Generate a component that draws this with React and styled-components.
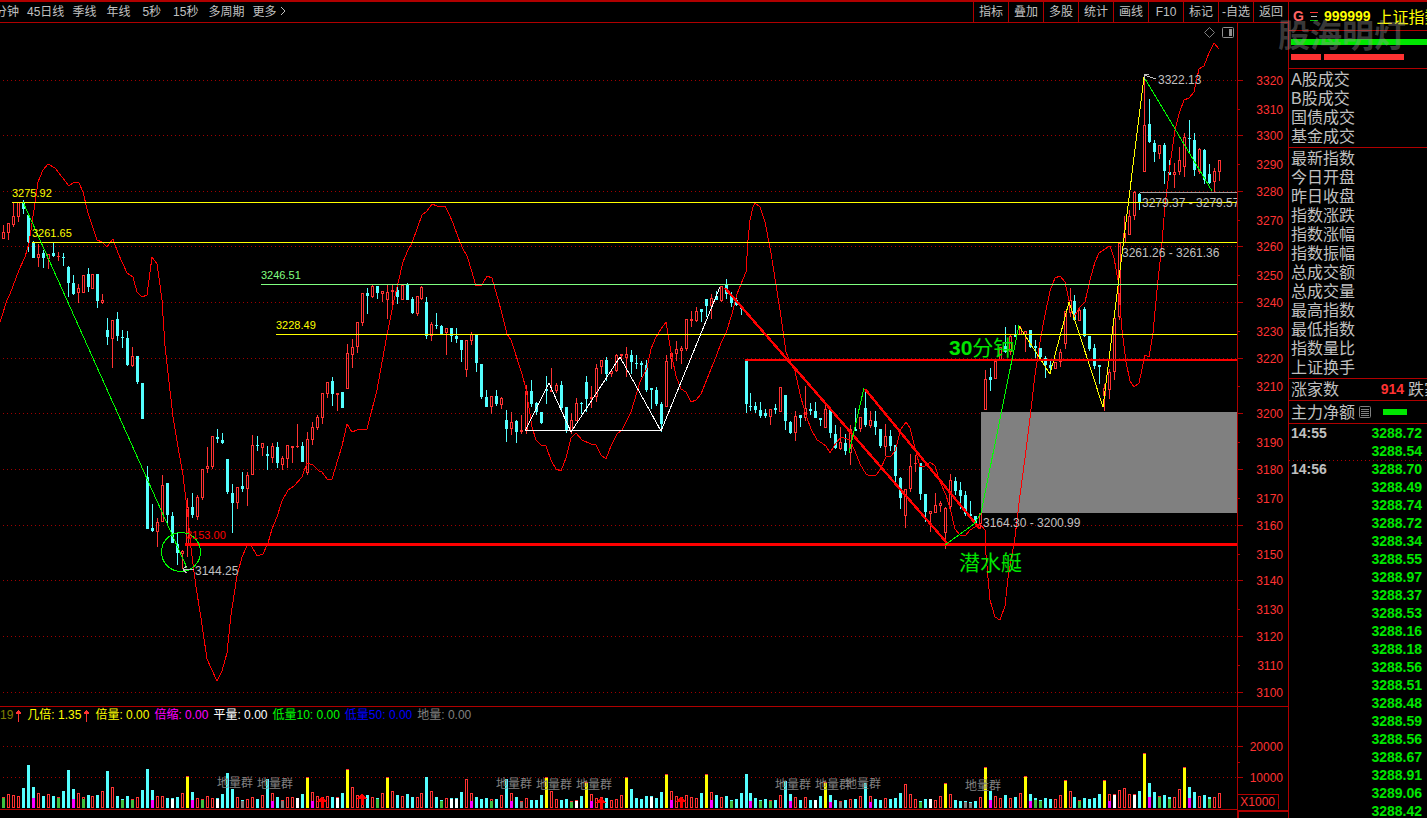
import React from "react";
import styled, { createGlobalStyle } from "styled-components";

const GlobalStyle = createGlobalStyle`
  * {
    box-sizing: border-box;
  }
  body {
    margin: 0;
    background: #000;
    color: #c0c0c0;
    font-family: "Liberation Sans", "Noto Sans CJK SC", sans-serif;
    font-size: 12px;
  }
`;

const RED = "#ff3232";
const CYAN = "#54ffff";
const FRAME = "#b00000";
const YELLOW = "#ffff00";
const GREEN = "#00ff00";

// direction + high,open/close top,open/close bottom,low
const candles = `
r225,232,239,239 r223,223,233,240 r202,216,225,227 r202,202,217,222 c200,202,209,214
c215,215,242,252 c241,242,258,258 r244,254,258,267 c250,253,258,268 r254,254,259,269
c243,253,256,257 r252,256,257,261 c253,257,258,266 c266,267,283,297 c275,283,294,295
r284,288,293,303 r275,275,293,293 c268,274,287,292 r274,274,289,289 c274,274,301,308
r294,300,303,304 c318,330,337,345 r320,320,339,368 c312,319,336,341 c330,337,338,348
c331,338,365,366 r347,356,366,367 c356,356,382,384 c383,383,419,419 c466,477,529,529
c504,528,531,532 r518,522,532,547 r475,485,522,522 c483,483,515,525 c512,516,543,543
c533,544,553,565 r550,551,554,569 r498,507,545,557 c493,507,515,518 r495,497,517,520
r469,469,498,500 r447,466,469,473 r436,436,467,469 c429,437,439,443 c433,440,443,444
c459,459,492,494 c484,493,503,533 r487,487,503,509 c472,486,489,492 r472,475,489,506
r435,445,475,475 c436,445,446,451 r443,443,448,456 c446,454,456,470 r443,446,458,463
c442,447,463,468 r456,458,465,470 r445,445,459,468 r446,446,448,463 r424,446,447,448
c442,446,462,462 r432,439,473,475 r422,427,440,445 r415,417,428,430 r393,393,418,424
r382,382,394,398 c377,381,394,406 r393,393,395,411 c392,392,408,408 r344,353,389,389
r339,347,355,368 r322,322,347,353 r293,293,323,326 c288,293,296,314 r285,286,297,298
c286,286,293,299 r291,291,294,302 r285,292,300,319 r285,290,292,306 c284,290,297,304
r285,285,300,300 c283,284,300,300 c297,299,313,314 r296,296,314,316 r286,287,299,300
c297,302,336,339 r322,324,336,341 c313,325,326,329 c325,326,334,334 r328,328,333,355
c328,328,336,342 c328,336,339,343 c340,340,350,362 r340,340,370,377 r332,334,341,345
c334,334,363,372 c364,364,397,399 c390,397,407,407 r396,396,407,414 c390,396,404,406
r397,398,405,409 c410,420,429,442 r412,422,429,435 c420,421,432,443 r415,430,432,434
r385,391,430,434 c380,391,404,407 c402,403,412,415 c412,412,423,424 c376,389,391,404
r368,390,392,392 r383,385,391,393 c381,385,408,411 c407,407,431,433 r413,420,431,434
r398,403,421,421 c402,403,404,414 c376,382,399,412 r386,397,399,408 r364,368,397,402
r360,360,367,374 c357,360,374,381 r370,371,374,377 r354,355,371,372 r354,354,356,359
r347,354,358,377 c350,355,362,374 c355,363,364,369 c361,363,365,377 c360,365,390,392
c388,388,390,409 c387,390,404,406 c402,404,424,432 r355,361,407,407 r353,353,359,369
r341,349,354,361 r346,348,351,364 r319,319,349,351 r311,319,321,327 r307,311,321,322
c309,309,312,322 c299,299,306,317 r294,298,306,319 c291,296,300,300 r286,286,301,302
c279,284,294,299 c292,296,303,307 c295,300,305,306 c305,306,309,315 c360,360,404,413
c393,406,407,411 c402,406,410,413 c402,410,416,418 c409,413,416,418 r409,409,417,425
c404,408,410,414 r387,387,412,412 c395,395,421,430 c421,422,433,434 r411,416,433,441
c415,415,418,427 r386,408,418,421 c403,409,411,415 c402,411,418,418 c418,418,420,426
r405,409,428,428 c407,409,433,438 c425,434,448,449 r427,442,449,450 c434,443,451,455
r425,429,453,465 c408,429,431,431 r417,417,429,432 c389,408,425,427 r411,420,426,428
c411,421,427,435 c429,429,446,448 r424,436,447,456 c430,436,446,451 c445,445,476,482
c477,478,498,509 r489,489,516,528 r454,466,489,492 r455,463,464,472 c463,463,494,500
c494,494,512,522 r511,511,514,532 r493,505,513,513 r501,503,506,512 r507,508,533,549
r474,480,507,511 c477,481,491,495 c482,490,496,509 c491,495,514,516 c501,514,516,516
c516,516,524,524 r513,513,524,529 r370,379,410,410 c368,377,380,391 r361,361,379,379
r347,347,360,361 c327,346,352,353 r334,336,352,355 c325,335,337,337 r326,328,335,335
r331,331,335,352 c330,330,347,348 c340,346,348,358 c348,348,357,359 c356,358,365,378
c360,365,368,371 r362,362,369,369 r349,352,362,367 r311,311,344,349 r288,300,313,317
c295,301,320,321 r309,310,321,321 c307,309,336,337 c336,336,349,351 c344,348,366,369
c365,365,367,384 r384,388,396,411 r369,372,390,399 r318,318,372,380 r243,243,317,320
r216,233,243,243 r210,216,235,235 r191,192,216,220 c193,194,202,210 r77,125,172,172
c99,124,142,143 c140,143,152,162 r145,145,154,159 c143,145,171,184 c160,172,175,175
r163,172,175,188 r147,160,172,175 r133,137,167,177 c120,138,139,153 c133,140,170,176
r148,149,172,174 c149,150,180,184 c164,174,183,184 r168,171,182,192 r160,160,172,181
`
  .trim()
  .split(/\s+/)
  .map((s) => ({ up: s[0] === "r", v: s.slice(1).split(",").map(Number) }));

// kind + height, then an optional marker colour + height at the foot of the bar
const volumes = `
r11g10 r14 r13 r12 c20 c43 c21m10 r15 c12 r14 c12 r11g10 c17 c38 c19m9 r15 r11g9 c13
r12 c13 r17 c37 r21 c12 c9g8 c12 r9g8 r11 c18 c39 c18m8 r12 r12 c10 c10w9 c11
r15 y32 c16m8 r10 r9g8 r12 r10 c10w9 c14 c35 c19 r11 c8k7 r9 r11 c9 r13 c29
r15m7 c11 r8k7 r11 r11 w10 c14 y31 r16m7 r12 r11 r12 c11 r11w10 c15 y39 r21 r13
r13 c13 r11 c10g9 r15 y31 r17 c13 r12 c14 c11 r11 r15 c31 r17 c11 c8g7 r10
c10w9 c10w9 c16 r29 r15m7 c11 c9 c10 r9g7 c9 r13 c29 r15m7 c11 r7k6 r10 c8 c8
c13 y31 r17 r9 c8 c9 r7g6 r8w7 c12 y26 r14m7 r10 r11 c10 r8 r9 r13 y31
c19 c10 c9 c12 c12w11 c10 c16 y34 r17m8 r12 r11 r13 r11 r10 c15 y34 r16m8 c13
r11 c12 c8g7 c9 c15 c34 c15m7 c10 c8g7 c9 r8g7 c8 r13 c27 c14m7 r11 c8 r11
c8 w8 c12 y26 c13m6 c8 r7k6 c8 r9 c9 r12 c25 r12m6 c9 c8 r10 c9 c10
c15 r24 r14 r9 c7g6 c9 w9 r8 r12 y25 r14 c8 c7 c7k6 c6k5 c7 r11 y41
c17m8 r12 r10 c13 r10 c11 r15 y32 c14m7 c10g8 c8g7 c10 c9 r9 r13 y28 r17 c11
r8g7 c10 c9 c10 c14 y28 r14m7 r14w13 r18 r20 r14 r14w13 c17 y55 c25m11 c16 r12g11 c13
c11g9 r11 r19 y41 c21m10 c16 r12 c13 c11g9 r11 r15
`
  .trim()
  .split(/\s+/)
  .map((s) => {
    const m = s.match(/^(\w)(\d+)(?:([a-z])(\d+))?$/);
    return { kind: m[1], h: Number(m[2]), foot: m[3], footH: Number(m[4] || 0) };
  });

const volumeColors = {
  r: RED,
  c: CYAN,
  y: YELLOW,
  w: "#ffffff",
  m: "#ff00ff",
  g: "#40c040",
  k: "#808080",
};

const average =
  "0,322 2,316 7,300 10,294 19,270 25,257 29,243 34,210 38,182 43,170 48,164 55,168 62,177 69,186 74,182 79,183 83,192 88,213 92,225 97,240 102,242 107,247 113,239 118,253 127,273 133,277 137,292 142,297 147,295 152,257 157,264 160,285 162,300 165,346 168,373 173,417 178,447 183,475 188,517 191,548 196,587 201,618 207,659 212,670 217,681 222,671 227,653 231,615 237,576 242,557 247,546 251,545 257,556 263,554 268,543 272,529 277,517 282,501 288,490 294,486 302,477 307,463 313,465 319,471 322,472 327,479 332,479 342,446 347,424 352,432 357,430 367,429 377,390 387,335 394,300 403,262 408,250 412,243 417,229 422,215 427,211 432,204 437,206 445,206 449,214 453,223 458,237 463,249 467,256 472,272 476,286 482,285 487,276 492,278 501,310 507,334 511,340 522,374 526,389 532,427 536,440 541,445 546,446 551,460 556,469 561,471 566,458 571,438 576,433 582,440 591,444 596,445 601,455 606,459 611,446 617,434 622,430 631,412 640,382 647,368 651,349 656,337 661,329 666,322 671,352 676,376 681,389 686,392 691,402 696,400 701,394 711,369 716,357 721,343 726,333 732,314 737,294 741,284 746,272 748,240 750,220 753,207 755,203 760,207 765,222 771,253 776,285 780,310 786,352 791,364 795,371 801,398 806,415 811,429 817,440 822,443 826,446 830,453 836,443 841,437 850,440 855,451 860,464 866,474 870,476 876,475 880,470 886,457 891,456 895,451 901,429 906,422 910,428 915,448 920,467 925,466 930,462 935,466 940,482 946,495 951,512 955,529 960,535 965,536 970,530 980,524 985,530 986,555 990,600 995,617 1000,620 1005,606 1008,578 1015,537 1020,495 1025,458 1030,418 1035,375 1040,342 1044,320 1050,291 1055,278 1060,276 1065,282 1070,305 1074,317 1080,307 1085,302 1090,280 1095,262 1099,253 1105,249 1110,246 1114,258 1118,280 1122,330 1126,362 1130,381 1134,387 1139,383 1145,355 1149,357 1153,333 1157,290 1162,243 1165,205 1170,165 1175,130 1179,114 1184,100 1189,98 1194,92 1199,69 1204,66 1209,53 1214,43 1219,49";

const axis = [
  80, 109, 135, 164, 191, 220, 246, 275, 302, 331, 358, 386, 413, 442, 469, 498,
  525, 554, 580, 609, 636, 665, 692,
].map((y, i) => ({ y, label: 3320 - i * 10, major: i % 2 === 0 }));

const periods = [
  { label: "分钟" },
  { label: "45日线" },
  { label: "季线" },
  { label: "年线", wide: true },
  { label: "5秒", wide: true },
  { label: "15秒", wide: true },
  { label: "多周期" },
  { label: "更多" },
];
const tools = ["指标", "叠加", "多股", "统计", "画线", "F10", "标记", "-自选", "返回"];

const indicators = [
  { text: "19", color: "#808000", arrow: true },
  { text: "几倍: 1.35", color: YELLOW, arrow: true },
  { text: "倍量: 0.00", color: YELLOW },
  { text: "倍缩: 0.00", color: "#ff00ff" },
  { text: "平量: 0.00", color: "#ffffff" },
  { text: "低量10: 0.00", color: GREEN },
  { text: "低量50: 0.00", color: "#0000ff" },
  { text: "地量: 0.00", color: "#808080" },
];

const groups = [
  [217, 787],
  [257, 788],
  [496, 788],
  [536, 789],
  [576, 789],
  [775, 789],
  [815, 789],
  [845, 788],
  [965, 790],
];
const arrows = [
  [322, 796],
  [362, 793],
  [601, 797],
  [681, 796],
];

const turnover = ["A股成交", "B股成交", "国债成交", "基金成交"];
const quotes = [
  "最新指数",
  "今日开盘",
  "昨日收盘",
  "指数涨跌",
  "指数涨幅",
  "指数振幅",
  "总成交额",
  "总成交量",
  "最高指数",
  "最低指数",
  "指数量比",
  "上证换手",
];
const ticks = [
  "3288.72",
  "3288.54",
  "3288.70",
  "3288.49",
  "3288.74",
  "3288.72",
  "3288.34",
  "3288.55",
  "3288.97",
  "3288.37",
  "3288.53",
  "3288.16",
  "3288.18",
  "3288.56",
  "3288.51",
  "3288.48",
  "3288.59",
  "3288.56",
  "3288.67",
  "3288.91",
  "3289.06",
  "3288.42",
];
const tickTimes = { 0: "14:55", 2: "14:56" };

// bars are a little under 5px apart, so one pixel is dropped every 65 bars or so
const barX = (i) => 3 + 5 * i - Math.floor((i + 48) / 65.7);

function Candle({ x, up, v }) {
  const [high, top, bottom, low] = v;
  const color = up ? RED : CYAN;
  const h = Math.max(1, bottom - top);
  return (
    <g fill={color}>
      {top > high && <rect x={x} y={high} width="1" height={top - high} />}
      {low > bottom && <rect x={x} y={bottom} width="1" height={low - bottom} />}
      {up && h > 2 ? (
        <rect x={x - 0.5} y={top + 0.5} width="2" height={h - 1} fill="none" stroke={color} />
      ) : (
        <rect x={x - 1} y={top} width="3" height={h} />
      )}
    </g>
  );
}

function VolumeBar({ x, kind, h, foot, footH }) {
  const top = 808 - h;
  return (
    <g>
      {kind === "r" ? (
        <rect x={x - 0.5} y={top + 0.5} width="2" height={h - 1} fill="none" stroke={RED} />
      ) : (
        <rect x={x - 1} y={top} width="3" height={h} fill={volumeColors[kind]} />
      )}
      {kind === "y" && <rect x={x - 1} y={top} width="3" height="1" fill={RED} />}
      {foot && (
        <rect x={x - 1} y={808 - footH} width="3" height={footH} fill={volumeColors[foot]} />
      )}
    </g>
  );
}

function PriceChart() {
  return (
    <Chart viewBox="0 23 1288 683" role="img" aria-label="上证指数 K线">
      <g shapeRendering="crispEdges" fill="none">
        {axis
          .filter((a) => a.major)
          .map((a) => (
            <path key={a.y} d={`M3 ${a.y}.5H1237`} stroke="#a00000" strokeDasharray="1 3" />
          ))}
        <rect x="981" y="412" width="256" height="101" fill="#808080" />
        {candles.map((c, i) => (
          <Candle key={i} x={barX(i)} {...c} />
        ))}
        <polyline points={average} stroke="#ff0000" />
        <g stroke={YELLOW}>
          <path d="M12 202.5H1237M32 242.5H1237M276 334.5H1237" />
          <path d="M1019 326L1050 374L1069 302L1103 407L1144 77" />
        </g>
        <path d="M261 284.5H1237" stroke="#80ff80" />
        <path d="M1140 192.5H1237" stroke="#a0a0a0" />
        <g stroke="#ff0000">
          <path d="M745 360H1237" strokeWidth="2" />
          <path d="M185 544.5H1237" strokeWidth="3" />
          <path d="M725 288L947 543M865 389L980 529" strokeWidth="2.4" />
        </g>
        <path
          d="M525 430.5H661M525 431L549 383L571 432L620 357L661 431L720 287"
          stroke="#ffffff"
        />
        <g stroke={GREEN}>
          <path d="M23 202L187 568M849 453L864 388M945 545L974 524L981 513L1019 325M1144 77L1212 191" />
          <circle cx="181" cy="552" r="19.5" />
        </g>
        <path
          d="M183 569.5H194M183 569L187 566M183 570L187 573M1144 75L1156 79M1144 75L1145 80M1144 75L1149 74"
          stroke="#c0c0c0"
        />
      </g>
      <path d="M1209.5 27.5L1214.5 32.5L1209.5 37.5L1204.5 32.5Z" fill="none" stroke="#808080" />
      <rect x="1222.5" y="27.5" width="11" height="10" rx="1" fill="none" stroke="#909090" />
      <rect x="1229" y="29" width="3" height="7" fill="#909090" />
      <Level x="12" y="197" fill={YELLOW}>3275.92</Level>
      <Level x="32" y="237" fill={YELLOW}>3261.65</Level>
      <Level x="261" y="279" fill="#80ff80">3246.51</Level>
      <Level x="276" y="329" fill={YELLOW}>3228.49</Level>
      <Level x="186" y="539" fill="#ff0000">3153.00</Level>
      <Note x="195" y="575">3144.25</Note>
      <Note x="1158" y="84">3322.13</Note>
      <Note x="1142" y="207">3279.37 - 3279.57</Note>
      <Note x="1122" y="257">3261.26 - 3261.36</Note>
      <Note x="983" y="527">3164.30 - 3200.99</Note>
      <Mark x="949" y="355">
        <tspan fontWeight="bold">30</tspan>分钟
      </Mark>
      <Mark x="959" y="570">潜水艇</Mark>
      <rect x="1237" y="23" width="51" height="683" fill="#000" />
      <g shapeRendering="crispEdges" stroke={FRAME}>
        <path d="M1237.5 23V706" />
        {axis.map((a) => (
          <path key={a.y} d={`M1238 ${a.y}.5h${a.major ? 5 : 2}`} />
        ))}
      </g>
      {axis.map((a) => (
        <AxisText key={a.y} x="1283" y={a.y + 5}>
          {a.label}
        </AxisText>
      ))}
    </Chart>
  );
}

function VolumeChart() {
  return (
    <Chart viewBox="0 724 1288 94" role="img" aria-label="成交量">
      <g shapeRendering="crispEdges" fill="none">
        <path d="M3 746.5H1237M3 777.5H1237" stroke="#a00000" strokeDasharray="1 3" />
        {volumes.map((v, i) => (
          <VolumeBar key={i} x={barX(i)} {...v} />
        ))}
        {arrows.map(([x, y]) => (
          <path key={x} d={`M${x} ${y}l5 6h-3v6h-3v-6h-4z`} fill="#ff0000" />
        ))}
        <path
          d="M0 809.5H1237M1237.5 724V810M1238 746.5h5M1238 762.5h2M1238 777.5h5M1238 794.5H1278.5V809"
          stroke={FRAME}
        />
        <path d="M1238 818V811H1288" stroke={FRAME} strokeWidth="2" />
      </g>
      {groups.map(([x, y]) => (
        <Group key={x} x={x} y={y}>
          地量群
        </Group>
      ))}
      <AxisText x="1283" y="751">20000</AxisText>
      <AxisText x="1283" y="782">10000</AxisText>
      <AxisText x="1275" y="806">X1000</AxisText>
    </Chart>
  );
}

export default function App() {
  return (
    <Page>
      <GlobalStyle />
      <Main>
        <Toolbar>
          <Periods>
            {periods.map((p) => (
              <Period key={p.label} $wide={p.wide}>
                {p.label}
                {p.label === "更多" && (
                  <svg width="10" height="10" aria-hidden="true">
                    <path d="M5 1L9 5L5 9" fill="none" stroke="#c0c0c0" />
                  </svg>
                )}
              </Period>
            ))}
          </Periods>
          {tools.map((t) => (
            <Tool key={t}>{t}</Tool>
          ))}
        </Toolbar>
        <PriceChart />
        <IndicatorBar>
          <IndicatorList>
            {indicators.map((n) => (
              <Indicator key={n.text} $color={n.color}>
                {n.text}
                {n.arrow && (
                  <svg width="7" height="12" aria-hidden="true" shapeRendering="crispEdges">
                    <path d="M3 0h1v1h1v1h1v2h-2v8h-1v-8h-2v-2h1v-1h1z" fill={RED} />
                  </svg>
                )}
              </Indicator>
            ))}
          </IndicatorList>
        </IndicatorBar>
        <VolumeChart />
      </Main>
      <Side>
        <Title>
          <Flag>G</Flag>
          <TitleIcon viewBox="0 0 8 11" aria-hidden="true" shapeRendering="crispEdges">
            <path d="M0 1.5h8" stroke={RED} />
            <path d="M1 5.5h6" stroke="#c0c0c0" />
            <path d="M0 9.5h8" stroke="#00c000" />
          </TitleIcon>
          <Code>999999</Code>
          <Name>上证指数</Name>
        </Title>
        <Strength>
          <Bar $color="#00e600" />
          <BarPair>
            <Bar $color={RED} $width={30} />
            <Bar $color={RED} $width={80} />
          </BarPair>
        </Strength>
        <Section>
          {turnover.map((t) => (
            <Row key={t}>{t}</Row>
          ))}
        </Section>
        <Section>
          {quotes.map((t) => (
            <Row key={t}>{t}</Row>
          ))}
        </Section>
        <Split>
          <Label>涨家数</Label>
          <Count>914</Count>
          <Label>跌家数</Label>
        </Split>
        <Split $tall>
          <Label>主力净额</Label>
          <MenuIcon viewBox="0 0 12 12" aria-hidden="true">
            <rect x="0.5" y="0.5" width="11" height="11" rx="1" fill="none" stroke="#808080" />
            <path d="M2 3.5h8M2 5.5h8M2 7.5h8M2 9.5h8" stroke="#808080" />
          </MenuIcon>
          <Bar $color="#00e600" $width={24} />
        </Split>
        <Ticks>
          <tbody>
            {ticks.map((price, i) => (
              <Tick key={i} $dotted={i === 2}>
                <Time>{tickTimes[i]}</Time>
                <Price>{price}</Price>
              </Tick>
            ))}
          </tbody>
        </Ticks>
      </Side>
      <Watermark>股海明灯</Watermark>
    </Page>
  );
}

const Page = styled.div`
  position: relative;
  display: grid;
  grid-template-columns: minmax(0, 1fr) 139px;
  height: 100vh;
  overflow: hidden;
`;

const Main = styled.main`
  min-width: 0;
`;

const Toolbar = styled.nav`
  display: flex;
  height: 23px;
  border-top: 2px solid ${FRAME};
  border-bottom: 1px solid ${FRAME};
`;

const Periods = styled.div`
  display: flex;
  flex: 1;
  gap: 8px;
  margin-left: -5px;
`;

const PlainButton = styled.button`
  padding: 0;
  border: 0;
  background: none;
  color: #c0c0c0;
  font: inherit;
  line-height: 20px;
  white-space: nowrap;
  cursor: pointer;
`;

const Period = styled(PlainButton)`
  padding: 0 ${(p) => (p.$wide ? "2px" : "0")};
`;

const Tool = styled(PlainButton)`
  width: 35px;
  border-left: 1px solid ${FRAME};
`;

const Chart = styled.svg`
  display: block;
  width: 100%;
`;

const AxisText = styled.text`
  fill: ${RED};
  font-size: 12px;
  text-anchor: end;
`;

const Level = styled.text`
  font-size: 11px;
`;

const Note = styled.text`
  fill: #c0c0c0;
  font-size: 12px;
`;

const Mark = styled.text`
  fill: #00e600;
  font-size: 21px;
`;

const Group = styled.text`
  fill: #808080;
  font-size: 12px;
`;

const IndicatorBar = styled.div`
  display: flex;
  height: 18px;
  padding-right: 50px;
  border-top: 1px solid ${FRAME};
`;

const IndicatorList = styled.div`
  display: flex;
  flex: 1;
  gap: 5px;
  border-right: 1px solid ${FRAME};
  line-height: 17px;
`;

const Indicator = styled.span`
  display: flex;
  align-items: center;
  gap: 2px;
  color: ${(p) => p.$color};
  white-space: nowrap;
`;

const Side = styled.aside`
  min-width: 0;
  overflow: hidden;
  border-top: 2px solid ${FRAME};
  border-left: 1px solid ${FRAME};
  font-size: 16px;
`;

const Title = styled.div`
  display: flex;
  align-items: center;
  gap: 6px;
  height: 29px;
  padding-left: 4px;
  border-bottom: 1px solid ${FRAME};
  white-space: nowrap;
`;

const Flag = styled.span`
  color: #ff6464;
  font-size: 14px;
  font-weight: bold;
`;

const TitleIcon = styled.svg`
  flex: none;
  width: 8px;
  height: 11px;
`;

const Code = styled.span`
  color: ${YELLOW};
  font-size: 14px;
  font-weight: bold;
`;

const Name = styled.span`
  color: ${YELLOW};
`;

const Strength = styled.div`
  display: flex;
  flex-direction: column;
  gap: 9px;
  height: 38px;
  padding: 8px 0 0 2px;
  border-bottom: 1px solid ${FRAME};
`;

const Bar = styled.div`
  flex: none;
  width: ${(p) => (p.$width ? p.$width + "px" : "100%")};
  height: 6px;
  background: ${(p) => p.$color};
`;

const BarPair = styled.div`
  display: flex;
  gap: 3px;
`;

const Section = styled.div`
  padding: 1px 0;
  border-bottom: 1px solid ${FRAME};
`;

const Row = styled.div`
  height: 19px;
  padding-left: 2px;
  line-height: 19px;
`;

const Split = styled.div`
  display: flex;
  align-items: center;
  height: ${(p) => (p.$tall ? "23px" : "22px")};
  padding-left: 2px;
  border-bottom: 1px solid ${FRAME};
  line-height: 21px;
  white-space: nowrap;
`;

const Label = styled.span`
  flex: none;
`;

const Count = styled.span`
  width: 69px;
  flex: none;
  padding-right: 4px;
  color: ${RED};
  font-size: 14px;
  font-weight: bold;
  text-align: right;
`;

const MenuIcon = styled.svg`
  flex: none;
  width: 12px;
  height: 12px;
  margin: 0 12px 0 4px;
`;

const Ticks = styled.table`
  width: 100%;
  border-collapse: collapse;
  font-size: 14px;
  font-weight: bold;
`;

const Tick = styled.tr`
  height: 18px;
  background: ${(p) =>
    p.$dotted
      ? `repeating-linear-gradient(90deg, ${FRAME} 0 1px, transparent 1px 4px) top / 100% 1px no-repeat`
      : "none"};
`;

const Time = styled.td`
  padding: 0 0 0 2px;
  line-height: 18px;
`;

const Price = styled.td`
  padding: 0 5px 0 0;
  color: #00e600;
  line-height: 18px;
  text-align: right;
`;

/* lies over the title and the strength bars */
const Watermark = styled.div`
  position: absolute;
  top: 12px;
  right: 21px;
  color: rgba(150, 150, 150, 0.4);
  font-size: 32px;
  font-weight: bold;
  line-height: 48px;
  white-space: nowrap;
  pointer-events: none;
`;
